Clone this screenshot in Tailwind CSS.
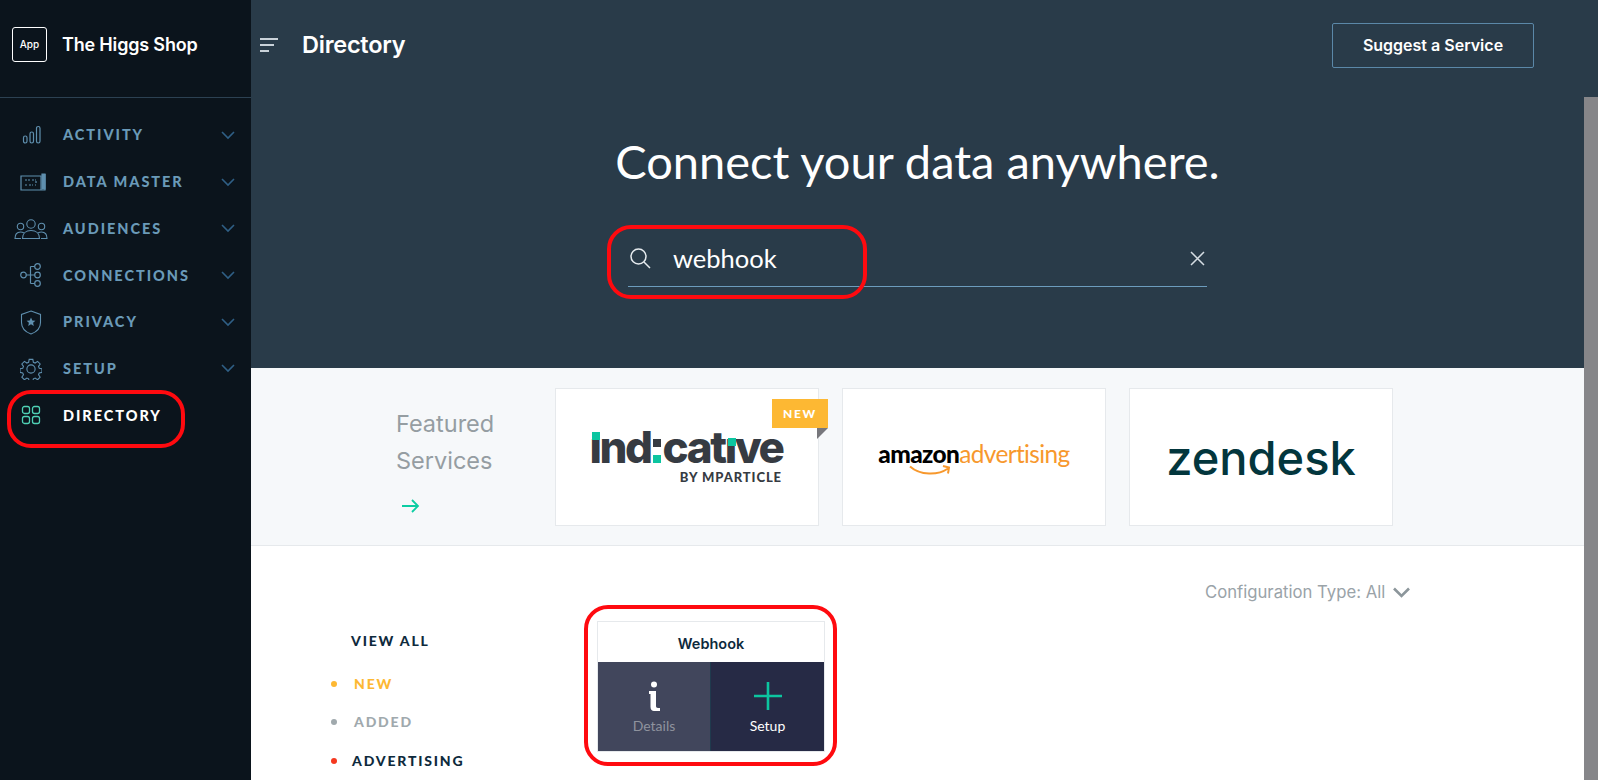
<!DOCTYPE html>
<html lang="en">
<head>
  <meta charset="UTF-8">
  <title>Directory</title>
  <script src="https://cdn.jsdelivr.net/npm/@tailwindcss/browser@4"></script>
</head>
<body class="bg-white font-[Lato,sans-serif] overflow-hidden">
  <div class="relative flex h-[780px] w-[1600px] overflow-hidden">

    <!-- Sidebar -->
    <aside class="w-[251px] shrink-0 bg-[#0b141c]">
      <div class="flex h-[98px] items-center gap-[15px] border-b border-[#2c4152] pl-3 pb-[8px]">
        <div class="flex size-[35px] items-center justify-center rounded-[3px] border border-white font-[Inter,sans-serif] text-[10px] font-medium text-white">App</div>
        <span class="font-[Inter,sans-serif] text-[18px] font-semibold tracking-[-0.01em] text-white">The Higgs Shop</span>
      </div>
      <nav class="pt-[14px] text-[14.500px] font-black tracking-[0.135em] text-[#6a9ab8]">
        <div class="flex h-[46.700px] items-center">
          <div class="flex w-[63px] justify-center">
            <svg width="20" height="20" viewBox="0 0 20 20" fill="none" stroke="#5f8fae" stroke-width="1.200"><rect x="1.500" y="11" width="3.500" height="7" rx="1.700"/><rect x="8" y="7" width="3.500" height="11" rx="1.700"/><rect x="14.500" y="1.500" width="3.500" height="16.500" rx="1.700"/></svg>
          </div>
          <span class="flex-1">ACTIVITY</span>
          <svg class="mr-[16px]" width="14" height="9" viewBox="0 0 14 9" fill="none" stroke="#2f5f85" stroke-width="1.600"><path d="M1 1l6 6 6-6"/></svg>
        </div>
        <div class="flex h-[46.700px] items-center">
          <div class="flex w-[65px] justify-center">
            <svg width="26" height="18" viewBox="0 0 26 18" fill="none" stroke="#5f8fae" stroke-width="1.200"><path d="M1 3h20v14H1zM21 17h4V1.500h-2.500"/><path d="M22 1h3v15h-3z" fill="#5f8fae"/><path d="M5 7h5M12 7h4M5 12h2M9 12h4M15 12h1M16 8v3" stroke-dasharray="2 1"/></svg>
          </div>
          <span class="-ml-[2px] flex-1">DATA MASTER</span>
          <svg class="mr-[16px]" width="14" height="9" viewBox="0 0 14 9" fill="none" stroke="#2f5f85" stroke-width="1.600"><path d="M1 1l6 6 6-6"/></svg>
        </div>
        <div class="flex h-[46.700px] items-center">
          <div class="flex w-[62px] justify-center">
            <svg width="34" height="20" viewBox="0 0 34 20" fill="none" stroke="#5f8fae" stroke-width="1.100"><circle cx="17" cy="5" r="4.200"/><circle cx="6.500" cy="7.500" r="3.200"/><circle cx="27.500" cy="7.500" r="3.200"/><path d="M8.500 19.500c0-5 3.500-8 8.500-8s8.500 3 8.500 8z"/><path d="M7 19.500H1c0-4 2-6.500 5.500-6.500 1.500 0 2.500.4 3.500 1M27 19.500h6c0-4-2-6.500-5.500-6.500-1.500 0-2.500.4-3.500 1"/></svg>
          </div>
          <span class="ml-[1px] flex-1">AUDIENCES</span>
          <svg class="mr-[16px]" width="14" height="9" viewBox="0 0 14 9" fill="none" stroke="#2f5f85" stroke-width="1.600"><path d="M1 1l6 6 6-6"/></svg>
        </div>
        <div class="flex h-[46.700px] items-center">
          <div class="flex w-[62px] justify-center">
            <svg width="22" height="24" viewBox="0 0 22 24" fill="none" stroke="#5f8fae" stroke-width="1.200"><circle cx="3.500" cy="12" r="2.800"/><circle cx="17.500" cy="3.500" r="2.800"/><circle cx="17.500" cy="12" r="2.800"/><circle cx="17.500" cy="20.500" r="2.800"/><path d="M6.300 12h8.400M10.500 3.500v17M10.500 3.500h4.200M10.500 20.500h4.200"/></svg>
          </div>
          <span class="ml-[1px] flex-1">CONNECTIONS</span>
          <svg class="mr-[16px]" width="14" height="9" viewBox="0 0 14 9" fill="none" stroke="#2f5f85" stroke-width="1.600"><path d="M1 1l6 6 6-6"/></svg>
        </div>
        <div class="flex h-[46.700px] items-center">
          <div class="flex w-[62px] justify-center">
            <svg width="22" height="25" viewBox="0 0 22 25" fill="none" stroke="#5f8fae" stroke-width="1.100"><path d="M11 1l9.500 3.500v8c0 5.500-4 9.500-9.500 11.500C5.500 22 1.500 18 1.500 12.500v-8z"/><path d="M11 7.500l1.300 2.900 3.100.3-2.300 2.100.7 3.100-2.800-1.600-2.800 1.600.7-3.100-2.300-2.100 3.100-.3z" fill="#5f8fae" stroke="none"/></svg>
          </div>
          <span class="ml-[1px] flex-1">PRIVACY</span>
          <svg class="mr-[16px]" width="14" height="9" viewBox="0 0 14 9" fill="none" stroke="#2f5f85" stroke-width="1.600"><path d="M1 1l6 6 6-6"/></svg>
        </div>
        <div class="flex h-[46.700px] items-center">
          <div class="flex w-[62px] justify-center">
            <svg width="22" height="22" viewBox="0 0 24 24" fill="none" stroke="#5f8fae" stroke-width="1.200"><circle cx="12" cy="12" r="4.500"/><path d="M10 1.500h4l.6 3.200 1.900.8 2.700-1.800 2.800 2.800-1.800 2.700.8 1.900 3 .6v4l-3 .6-.8 1.900 1.800 2.700-2.800 2.800-2.700-1.800-1.900.8-.6 2.800h-4l-.6-2.800-1.900-.8-2.700 1.800-2.800-2.800 1.800-2.700-.8-1.900-3-.6v-4l3-.6.8-1.900-1.800-2.700 2.800-2.800 2.700 1.800 1.900-.8z"/></svg>
          </div>
          <span class="ml-[1px] flex-1">SETUP</span>
          <svg class="mr-[16px]" width="14" height="9" viewBox="0 0 14 9" fill="none" stroke="#2f5f85" stroke-width="1.600"><path d="M1 1l6 6 6-6"/></svg>
        </div>
        <div class="flex h-[46.700px] items-center text-white">
          <div class="flex w-[62px] justify-center">
            <svg width="20" height="20" viewBox="0 0 20 20" fill="none" stroke="#4fd1b5" stroke-width="1.300"><rect x="1.500" y="1.500" width="7" height="7" rx="2"/><rect x="11.500" y="1.500" width="7" height="7" rx="2"/><rect x="1.500" y="11.500" width="7" height="7" rx="2"/><rect x="11.500" y="11.500" width="7" height="7" rx="2"/></svg>
          </div>
          <span class="ml-[1px] flex-1">DIRECTORY</span>
        </div>
      </nav>
    </aside>

    <!-- Main -->
    <main class="w-[1347px] shrink-0">
      <section class="h-[368px] bg-[#293b49] pr-[14px] text-white">
        <header class="flex h-[90px] items-center pr-[50px]">
          <svg class="ml-[9px]" width="19" height="16" viewBox="0 0 19 16" fill="none" stroke="#c9d2d9" stroke-width="2.200"><path d="M0 2h18M0 8h14M0 14h9"/></svg>
          <h2 class="ml-[23px] flex-1 font-[Inter,sans-serif] text-[23.500px] font-semibold tracking-[-0.01em]">Directory</h2>
          <button class="h-[45px] w-[202px] rounded-[2px] border border-[#5b88a8] font-[Inter,sans-serif] text-[16px] font-semibold">Suggest a Service</button>
        </header>
        <div class="flex flex-col items-center">
          <h1 class="mt-[39px] text-[47px] leading-[64px] font-normal">Connect your data anywhere.</h1>
          <div class="mt-[30px] flex h-[64px] w-[579px] items-center border-b border-[#6c9cbd] pt-[7px]">
            <svg class="ml-[1px]" width="22" height="22" viewBox="0 0 22 22" fill="none" stroke="#e6ebef" stroke-width="1.500"><circle cx="9.500" cy="9.500" r="7.500"/><path d="M15 15l6 6"/></svg>
            <span class="ml-[22px] flex-1 text-[25.500px]">webhook</span>
            <svg class="mr-[2px]" width="15" height="15" viewBox="0 0 15 15" fill="none" stroke="#d5dde3" stroke-width="1.500"><path d="M1 1l13 13M14 1L1 14"/></svg>
          </div>
        </div>
      </section>

      <!-- Featured -->
      <section class="flex h-[178px] border-b border-[#e6e9ec] bg-[#f6f8fa] pt-[20px] pl-[144px]">
        <div class="w-[160px] pt-[17px] pl-[1px] font-[Inter,sans-serif] text-[23.500px] leading-[37px] text-[#959da2]">
          <p>Featured<br>Services</p>
          <svg class="mt-[20px] ml-[6px]" width="18" height="14" viewBox="0 0 18 14" fill="none" stroke="#0ccda3" stroke-width="1.800"><path d="M0 7h16M10 1l6 6-6 6"/></svg>
        </div>
        <div class="relative h-[138px] w-[264px] border border-[#e6e9ec] bg-white">
          <div class="flex h-full flex-col items-center justify-center pr-[2px]">
            <div class="flex h-[36px] items-end font-[Inter,sans-serif] text-[44px] leading-[36px] font-extrabold tracking-[-0.055em] text-[#363b42]">
              <span class="relative">ı<span class="absolute top-[3px] left-[3px] size-[8px] bg-[#0cc5a0]"></span></span><span>nd</span>
              <span class="relative mx-[2px] h-[36px] w-[8px]"><span class="absolute top-[10px] left-0 size-[8px] bg-[#363b42]"></span><span class="absolute bottom-[2px] left-0 size-[8px] bg-[#0cc5a0]"></span></span>
              <span>cat</span>
              <span class="relative">ı<span class="absolute top-[9px] left-[3px] size-[8px] bg-[#0cc5a0]"></span></span><span>ve</span>
            </div>
            <div class="mt-[5px] w-[192px] text-right text-[13px] leading-[15px] font-black tracking-[0.07em] text-[#363b42]">BY MPARTICLE</div>
          </div>
          <div class="absolute top-[10px] right-[-10px] flex h-[29px] w-[56px] items-center justify-center bg-[#fdb833] text-[12px] font-black tracking-[0.14em] text-white">NEW</div>
          <div class="absolute top-[39px] right-[-10px] size-0 border-t-[11px] border-r-[11px] border-t-[#77777c] border-r-transparent"></div>
        </div>
        <div class="ml-[23px] flex h-[138px] w-[264px] flex-col items-center justify-center border border-[#e6e9ec] bg-white pt-[2px]">
          <div class="flex items-baseline text-[24.400px] leading-[28px] tracking-[-0.025em]">
            <span class="font-black text-black">amazon</span><span class="font-normal text-[#f7982d]">advertising</span>
          </div>
          <svg class="mr-[88px] -mt-[3px]" width="42" height="12" viewBox="0 0 42 12" fill="none" stroke="#f7982d" stroke-width="2"><path d="M1 1.500c10 9 28 9 38 2M34 1l6 1.500-1 6"/></svg>
        </div>
        <div class="ml-[23px] flex h-[138px] w-[264px] items-center justify-center border border-[#e6e9ec] bg-white pt-[2px]">
          <span class="font-[Inter,sans-serif] text-[47px] leading-[46px] font-medium text-[#03363d]">zendesk</span>
        </div>
      </section>

      <!-- Directory list -->
      <section class="relative flex pl-[83px]">
        <div class="w-[263px] pt-[86px] text-[14px] font-black tracking-[0.13em]">
          <div class="ml-[17px] leading-[18px] text-[#0e2a3c]">VIEW ALL</div>
          <div class="mt-[25px] -ml-[3px] flex items-center leading-[18px] text-[#fdb833]"><span class="mr-[17px] size-[6px] rounded-full bg-[#fdb833]"></span>NEW</div>
          <div class="mt-[20px] -ml-[3px] flex items-center leading-[18px] text-[#a0a9ad]"><span class="mr-[17px] size-[6px] rounded-full bg-[#a0a9ad]"></span>ADDED</div>
          <div class="mt-[21px] -ml-[3px] flex items-center leading-[18px] text-[#0e2a3c]"><span class="mr-[15px] size-[6px] rounded-full bg-[#f5381f]"></span>ADVERTISING</div>
        </div>
        <div class="mt-[75px] h-[131px] w-[228px] border border-[#e6e9ec]">
          <div class="flex h-[40px] items-center justify-center pt-[4px] font-[Inter,sans-serif] text-[14.500px] font-semibold text-[#0e2a3c]">Webhook</div>
          <div class="flex h-[89px]">
            <div class="flex w-[112px] flex-col items-center bg-[#41465c] text-[#8f939e]">
              <svg class="mt-[19px]" width="14" height="30" viewBox="0 0 14 30"><circle cx="7" cy="3.500" r="3" fill="#fff"/><path d="M2 10h7v15c0 1 .7 2 2 2h2v3H7c-2 0-3.500-1.500-3.500-4V13H2z" fill="#fff"/></svg>
              <span class="mt-[6px] text-[14px] leading-[18px]">Details</span>
            </div>
            <div class="w-px bg-[#1f3a4d]"></div>
            <div class="flex flex-1 flex-col items-center bg-[#262a45] text-white">
              <svg class="mt-[20px]" width="28" height="28" viewBox="0 0 28 28" fill="none" stroke="#0cc5a0" stroke-width="2.600"><path d="M14 0v28M0 14h28"/></svg>
              <span class="mt-[7px] text-[14px] leading-[18px]">Setup</span>
            </div>
          </div>
        </div>
        <div class="absolute top-[36px] left-[954px] flex items-center gap-[8px] font-[Inter,sans-serif] text-[16.700px] leading-[20px] text-[#9aa3a8]">
          Configuration Type: All
          <svg width="17" height="11" viewBox="0 0 17 11" fill="none" stroke="#8c969b" stroke-width="2.600"><path d="M1 1.500l7.500 7.500 7.500-7.500"/></svg>
        </div>
      </section>
    </main>

    <!-- Scrollbar thumb -->
    <div class="absolute top-[97px] bottom-0 left-[1584px] w-[14px] bg-[#868689]"></div>

    <!-- Red annotations -->
    <div class="absolute top-[390px] left-[7px] h-[58px] w-[178px] rounded-[24px] border-[4px] border-[#ff0a0f]"></div>
    <div class="absolute top-[225px] left-[607px] h-[74px] w-[260px] rounded-[24px] border-[4px] border-[#ff0a0f]"></div>
    <div class="absolute top-[605px] left-[584px] h-[161px] w-[253px] rounded-[24px] border-[4px] border-[#ff0a0f]"></div>
  </div>
</body>
</html>
